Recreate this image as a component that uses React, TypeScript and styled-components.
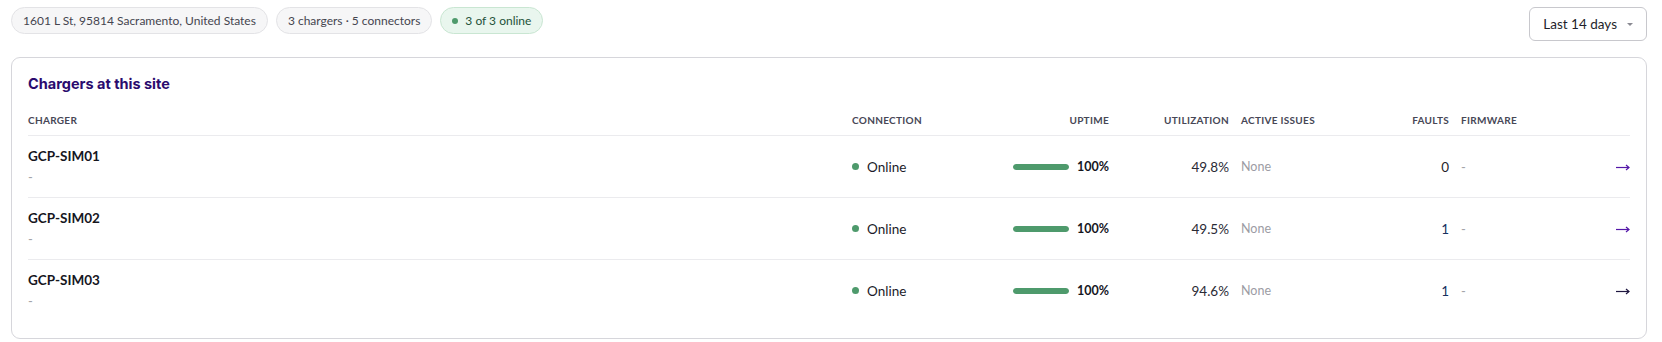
import React from 'react';
import styled, { createGlobalStyle } from 'styled-components';

interface ChargerRow {
  id: string;
  uptime: number;
  utilization: string;
  faults: number;
  arrowDark?: boolean;
}

const chargers: ChargerRow[] = [
  { id: 'GCP-SIM01', uptime: 100, utilization: '49.8%', faults: 0 },
  { id: 'GCP-SIM02', uptime: 100, utilization: '49.5%', faults: 1 },
  { id: 'GCP-SIM03', uptime: 100, utilization: '94.6%', faults: 1, arrowDark: true },
];

const GlobalStyle = createGlobalStyle`
  html, body {
    margin: 0;
    padding: 0;
    background: #ffffff;
  }
  body {
    font-family: "Lato", "Liberation Sans", sans-serif;
    color: #1c1c24;
  }
`;

const Page = styled.div`
  padding: 7px 15px 6px 11px;
`;

const TopBar = styled.div`
  display: flex;
  justify-content: space-between;
  align-items: flex-start;
  margin-bottom: 16px;
`;

const Pills = styled.div`
  display: flex;
  gap: 8px;
`;

const Pill = styled.div<{ $green?: boolean }>`
  display: flex;
  align-items: center;
  gap: 7px;
  height: 25px;
  padding: 0 11px;
  border-radius: 14px;
  font-size: 12px;
  border: 1px solid ${p => (p.$green ? '#c9e6d2' : '#e3e3e6')};
  background: ${p => (p.$green ? '#e9f6ee' : '#f6f6f7')};
  color: ${p => (p.$green ? '#24523a' : '#45454f')};
`;

const Dot = styled.span<{ $size?: number }>`
  display: inline-block;
  width: ${p => p.$size ?? 6}px;
  height: ${p => p.$size ?? 6}px;
  border-radius: 50%;
  background: #4e9a6c;
`;

const RangeButton = styled.button`
  display: flex;
  align-items: center;
  gap: 10px;
  height: 34px;
  padding: 0 13px 0 13px;
  border: 1px solid #c8c8cd;
  border-radius: 6px;
  background: #fff;
  font-family: inherit;
  font-size: 13.5px;
  color: #1f1f2b;
`;

const Caret = styled.span`
  width: 0;
  height: 0;
  border-left: 3px solid transparent;
  border-right: 3px solid transparent;
  border-top: 3px solid #8a8a92;
`;

const Card = styled.section`
  border: 1px solid #d6d6db;
  border-radius: 9px;
  padding: 16px 16px 17px;
  background: #fff;
`;

const Title = styled.h2`
  margin: 0 0 13px;
  font-family: "Inter", "Lato", sans-serif;
  font-size: 14.5px;
  font-weight: 700;
  line-height: 20px;
  color: #2a0b6e;
`;

const cols = '1fr 100px 145px 108px 136px 60px 133px 24px';

const HeadRow = styled.div`
  display: grid;
  grid-template-columns: ${cols};
  column-gap: 12px;
  padding: 6px 0 8px;
  border-bottom: 1px solid #ebebee;
`;

const HeadCell = styled.div<{ $right?: boolean }>`
  font-size: 10px;
  font-weight: 700;
  letter-spacing: 0.3px;
  line-height: 14px;
  text-transform: uppercase;
  color: #474756;
  text-align: ${p => (p.$right ? 'right' : 'left')};
`;

const Row = styled.div<{ $last?: boolean }>`
  display: grid;
  grid-template-columns: ${cols};
  column-gap: 12px;
  align-items: center;
  padding: 11px 0 11px;
  border-bottom: ${p => (p.$last ? 'none' : '1px solid #ebebee')};
`;

const NameCell = styled.div`
  display: flex;
  flex-direction: column;
  gap: 3px;
`;

const Name = styled.div`
  font-size: 13.5px;
  font-weight: 700;
  line-height: 18px;
  color: #16161e;
`;

const Muted = styled.div`
  font-size: 13px;
  line-height: 18px;
  color: #a3a3aa;
`;

const Connection = styled.div`
  display: flex;
  align-items: center;
  gap: 8px;
  font-size: 13.5px;
  color: #1c1c2a;
`;

const Uptime = styled.div`
  display: flex;
  justify-content: flex-end;
  align-items: center;
  gap: 8px;
`;

const Track = styled.div`
  width: 56px;
  height: 6px;
  border-radius: 3px;
  background: #e6eee9;
  overflow: hidden;
`;

const Fill = styled.div`
  height: 100%;
  border-radius: 3px;
  background: #4e9a6c;
`;

const UptimeValue = styled.span`
  font-size: 12.5px;
  font-weight: 700;
  color: #16161e;
`;

const Num = styled.div`
  text-align: right;
  font-size: 13.5px;
  color: #2a2a35;
`;

const Faults = styled(Num)<{ $has?: boolean }>`
  color: ${p => (p.$has ? '#17305e' : '#1f1f2b')};
`;

const Issues = styled.div`
  font-size: 12.5px;
  color: #9c9ca4;
`;

const Arrow = styled.a<{ $dark?: boolean }>`
  justify-self: end;
  display: flex;
  align-items: center;
  color: ${p => (p.$dark ? '#1e1640' : '#5417a8')};
`;

const ArrowIcon = () => (
  <svg width="14" height="8" viewBox="0 0 14 8" fill="none" stroke="currentColor" strokeWidth="1.2">
    <path d="M0 4.5H13" />
    <path d="M10 2L13 4.5L10 7" />
  </svg>
);

export default function App() {
  return (
    <Page>
      <GlobalStyle />
      <TopBar>
        <Pills>
          <Pill>1601 L St, 95814 Sacramento, United States</Pill>
          <Pill>3 chargers · 5 connectors</Pill>
          <Pill $green>
            <Dot $size={6} />
            3 of 3 online
          </Pill>
        </Pills>
        <RangeButton>
          Last 14 days
          <Caret />
        </RangeButton>
      </TopBar>

      <Card>
        <Title>Chargers at this site</Title>
        <HeadRow>
          <HeadCell>Charger</HeadCell>
          <HeadCell>Connection</HeadCell>
          <HeadCell $right>Uptime</HeadCell>
          <HeadCell $right>Utilization</HeadCell>
          <HeadCell>Active issues</HeadCell>
          <HeadCell $right>Faults</HeadCell>
          <HeadCell>Firmware</HeadCell>
          <HeadCell />
        </HeadRow>
        {chargers.map((c, i) => (
          <Row key={c.id} $last={i === chargers.length - 1}>
            <NameCell>
              <Name>{c.id}</Name>
              <Muted>-</Muted>
            </NameCell>
            <Connection>
              <Dot $size={7} />
              Online
            </Connection>
            <Uptime>
              <Track>
                <Fill style={{ width: `${c.uptime}%` }} />
              </Track>
              <UptimeValue>{c.uptime}%</UptimeValue>
            </Uptime>
            <Num>{c.utilization}</Num>
            <Issues>None</Issues>
            <Faults $has={c.faults > 0}>{c.faults}</Faults>
            <Muted>-</Muted>
            <Arrow href="#" $dark={c.arrowDark}>
              <ArrowIcon />
            </Arrow>
          </Row>
        ))}
      </Card>
    </Page>
  );
}
